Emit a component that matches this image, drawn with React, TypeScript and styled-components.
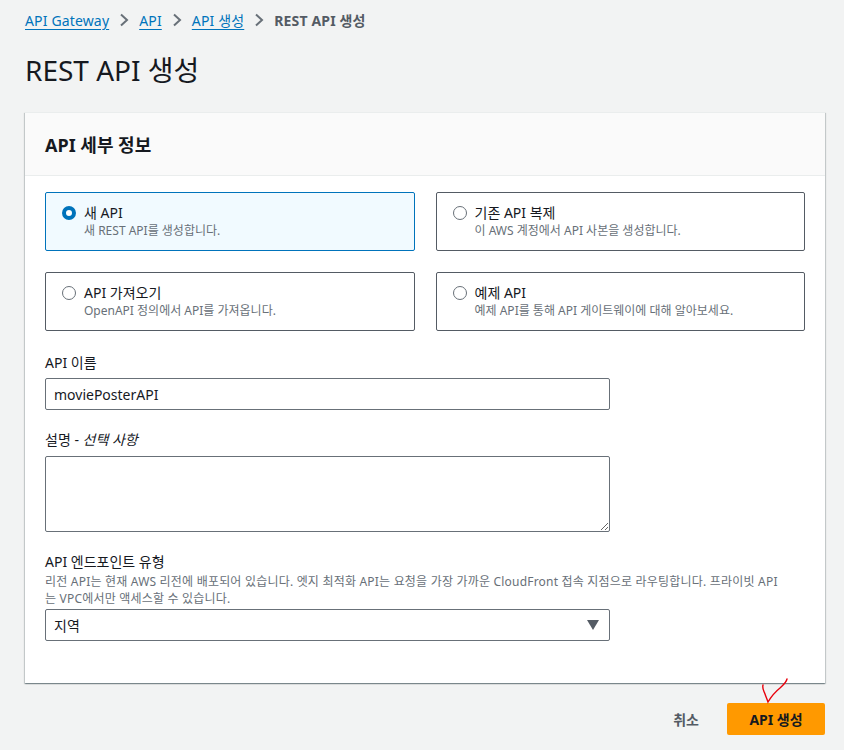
import React, { useState } from "react";
import styled, { createGlobalStyle } from "styled-components";

const GlobalStyle = createGlobalStyle`
  body {
    margin: 0;
    background: #f2f3f3;
    font-family: "Noto Sans", "Noto Sans CJK KR", sans-serif;
    color: #16191f;
  }
`;

type Option = { id: string; title: string; desc: string };

const options: Option[] = [
  { id: "new", title: "새 API", desc: "새 REST API를 생성합니다." },
  { id: "clone", title: "기존 API 복제", desc: "이 AWS 계정에서 API 사본을 생성합니다." },
  { id: "import", title: "API 가져오기", desc: "OpenAPI 정의에서 API를 가져옵니다." },
  { id: "example", title: "예제 API", desc: "예제 API를 통해 API 게이트웨이에 대해 알아보세요." },
];

export default function App(): React.ReactElement {
  const [selected, setSelected] = useState("new");
  const [name, setName] = useState("moviePosterAPI");

  return (
    <Page>
      <GlobalStyle />
      <Breadcrumbs>
        <Crumb href="#">API Gateway</Crumb>
        <Chevron />
        <Crumb href="#">API</Crumb>
        <Chevron />
        <Crumb href="#">API 생성</Crumb>
        <Chevron />
        <Current>REST API 생성</Current>
      </Breadcrumbs>
      <Title>REST API 생성</Title>

      <Panel>
        <PanelHeader>API 세부 정보</PanelHeader>
        <PanelBody>
          <Tiles>
            {options.map((o) => (
              <Tile
                key={o.id}
                $active={selected === o.id}
                onClick={() => setSelected(o.id)}
              >
                <Radio $active={selected === o.id} />
                <TileText>
                  <TileTitle>{o.title}</TileTitle>
                  <TileDesc>{o.desc}</TileDesc>
                </TileText>
              </Tile>
            ))}
          </Tiles>

          <Field>
            <Label>API 이름</Label>
            <Input value={name} onChange={(e) => setName(e.target.value)} />
          </Field>

          <Field>
            <Label>
              설명 - <i>선택 사항</i>
            </Label>
            <TextArea />
          </Field>

          <Field>
            <Label>API 엔드포인트 유형</Label>
            <Hint>
              리전 API는 현재 AWS 리전에 배포되어 있습니다. 엣지 최적화 API는 요청을 가장 가까운
              CloudFront 접속 지점으로 라우팅합니다. 프라이빗 API<wbr />는 VPC에서만 액세스할 수
              있습니다.
            </Hint>
            <Select>
              <span>지역</span>
              <Caret />
            </Select>
          </Field>
        </PanelBody>
      </Panel>

      <Footer>
        <CancelButton>취소</CancelButton>
        <PrimaryButton>
          API 생성
          <Scribble viewBox="0 0 40 30" width="40" height="30">
            <path
              d="M3 8 C2 12 4 14 5 17 C6 20 7 22 8 25 C11 20 15 15 20 11 C23 8 26 6 27 2"
              fill="none"
              stroke="#e8000b"
              strokeWidth="1.4"
              strokeLinecap="round"
            />
          </Scribble>
        </PrimaryButton>
      </Footer>
    </Page>
  );
}

const Page = styled.div`
  padding: 10px 19px 16px 25px;
  min-height: 750px;
  box-sizing: border-box;
`;

const Breadcrumbs = styled.nav`
  display: flex;
  align-items: center;
  gap: 10px;
  font-size: 14px;
  height: 20px;
  letter-spacing: 0.15px;
`;

const Crumb = styled.a`
  color: #0073bb;
  text-decoration: underline;
  text-underline-offset: 3px;
`;

const Current = styled.span`
  color: #545b64;
  font-weight: 700;
`;

const Chevron = () => (
  <svg width="10" height="14" viewBox="0 0 10 14">
    <path d="M2 1.5 L8 7 L2 12.5" fill="none" stroke="#687078" strokeWidth="2" />
  </svg>
);

const Title = styled.h1`
  margin: 22px 0 24px;
  font-size: 28px;
  font-weight: 400;
  line-height: 36px;
`;

const Panel = styled.section`
  background: #fff;
  box-shadow: 0 1px 1px 0 rgba(0, 28, 36, 0.3), 1px 1px 1px 0 rgba(0, 28, 36, 0.15),
    -1px 1px 1px 0 rgba(0, 28, 36, 0.15);
  border-top: 1px solid #eaeded;
`;

const PanelHeader = styled.h2`
  margin: 0;
  padding: 0 20px;
  height: 62px;
  display: flex;
  align-items: center;
  background: #fafafa;
  border-bottom: 1px solid #eaeded;
  font-size: 18px;
  font-weight: 700;
`;

const PanelBody = styled.div`
  padding: 16px 20px 42px;
  display: flex;
  flex-direction: column;
  gap: 20px;
`;

const Tiles = styled.div`
  display: grid;
  grid-template-columns: 1fr 1fr;
  column-gap: 21px;
  row-gap: 21px;
  margin-bottom: 2px;
`;

const Tile = styled.div<{ $active: boolean }>`
  display: flex;
  align-items: flex-start;
  gap: 8px;
  height: 59px;
  box-sizing: border-box;
  padding: 11px 16px;
  border: 1px solid ${(p) => (p.$active ? "#0073bb" : "#545b64")};
  background: ${(p) => (p.$active ? "#f1faff" : "#fff")};
  border-radius: 2px;
  cursor: pointer;
`;

const Radio = styled.span<{ $active: boolean }>`
  flex: none;
  width: 14px;
  height: 14px;
  margin-top: 2px;
  border-radius: 50%;
  box-sizing: border-box;
  border: ${(p) => (p.$active ? "4px solid #0073bb" : "1.5px solid #687078")};
  background: #fff;
`;

const TileText = styled.div`
  display: flex;
  flex-direction: column;
`;

const TileTitle = styled.span`
  font-size: 14px;
  line-height: 18px;
`;

const TileDesc = styled.span`
  font-size: 12px;
  line-height: 18px;
  color: #687078;
`;

const Field = styled.div`
  display: flex;
  flex-direction: column;
`;

const Label = styled.label`
  font-size: 14px;
  line-height: 20px;
  margin-bottom: 5px;
`;

const Hint = styled.p`
  margin: -4px 0 2px;
  font-size: 12px;
  line-height: 17px;
  color: #687078;
  max-width: 736px;
  letter-spacing: 0.2px;
`;

const Input = styled.input`
  width: 565px;
  height: 32px;
  box-sizing: border-box;
  border: 1px solid #687078;
  border-radius: 2px;
  padding: 0 8px;
  font: inherit;
  font-size: 14px;
  color: #16191f;
`;

const TextArea = styled.textarea`
  width: 565px;
  height: 76px;
  margin-top: 1px;
  box-sizing: border-box;
  border: 1px solid #687078;
  border-radius: 2px;
  font: inherit;
  resize: vertical;
`;

const Select = styled.div`
  width: 565px;
  height: 32px;
  box-sizing: border-box;
  border: 1px solid #687078;
  border-radius: 2px;
  padding: 0 10px 0 8px;
  display: flex;
  align-items: center;
  justify-content: space-between;
  font-size: 14px;
`;

const Caret = styled.span`
  width: 0;
  height: 0;
  border-left: 6px solid transparent;
  border-right: 6px solid transparent;
  border-top: 10px solid #545b64;
`;

const Footer = styled.div`
  display: flex;
  justify-content: flex-end;
  align-items: center;
  gap: 20px;
  margin-top: 20px;
`;

const CancelButton = styled.button`
  background: none;
  border: none;
  font: inherit;
  font-size: 14px;
  font-weight: 700;
  color: #545b64;
  padding: 0 8px;
`;

const PrimaryButton = styled.button`
  position: relative;
  background: #ff9900;
  border: none;
  border-radius: 2px;
  width: 98px;
  height: 32px;
  font: inherit;
  font-size: 14px;
  font-weight: 700;
  color: #16191f;
`;

const Scribble = styled.svg`
  position: absolute;
  left: 33px;
  top: -26px;
  pointer-events: none;
`;
